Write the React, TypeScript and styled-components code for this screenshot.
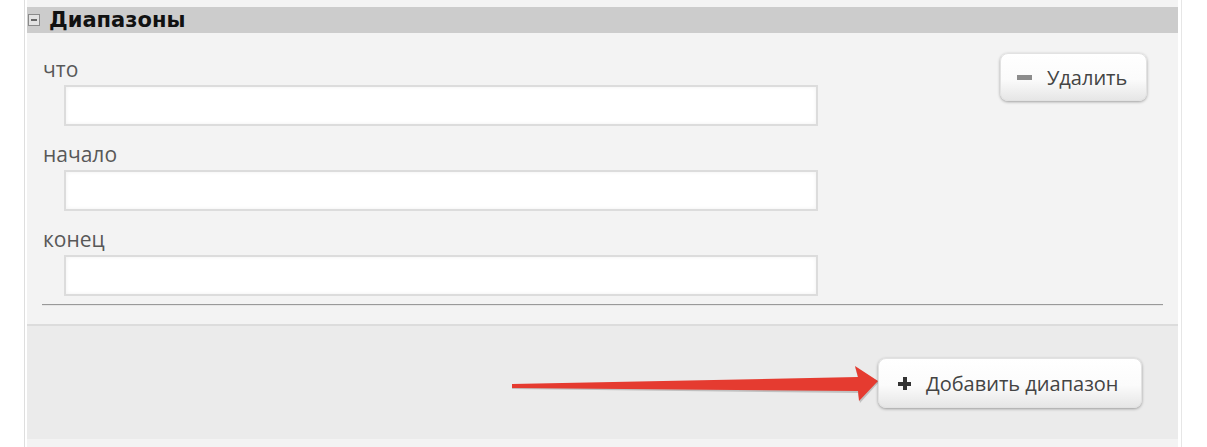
import React from 'react';
import styled, { createGlobalStyle } from 'styled-components';

const Global = createGlobalStyle`
  html, body { margin: 0; padding: 0; background: #fff; }
  body { font-family: "Open Sans", "DejaVu Sans", sans-serif; }
  * { box-sizing: border-box; }
`;

const fields = ['что', 'начало', 'конец'];

export default function App() {
  return (
    <>
      <Global />
      <Frame>
        <Panel>
          <Header>
            <Toggle />
            <Title>Диапазоны</Title>
          </Header>
          <Section>
            <Body>
              <Fields>
                {fields.map((f) => (
                  <Field key={f}>
                    <Label>{f}</Label>
                    <Input type="text" />
                  </Field>
                ))}
              </Fields>
              <Button $w={147} $h={48}>
                <MinusIcon />
                Удалить
              </Button>
            </Body>
            <Divider />
          </Section>
          <Footer>
            <Arrow viewBox="505 355 380 50" width="380" height="50">
              <polygon
                points="512,384 858,377 855,366 879,381 860,402 858,392 512,388"
                fill="#000"
                opacity="0.18"
              />
              <polygon
                points="512,383 858,376 855,365 878,380 859,400 858,390 512,387"
                fill="#e53b30"
              />
            </Arrow>
            <Button $w={264} $h={50}>
              <PlusIcon />
              Добавить диапазон
            </Button>
          </Footer>
        </Panel>
      </Frame>
    </>
  );
}

const Frame = styled.div`
  margin-left: 24px;
  width: 1158px;
  min-height: 100vh;
  border-left: 1px solid #dedede;
  border-right: 1px solid #e6e6e6;
  padding: 0 3px 0 2px;
  display: flex;
`;

const Panel = styled.div`
  flex: 1;
  background: #f3f3f3;
  padding-top: 7px;
`;

const Header = styled.div`
  height: 26px;
  background: #cccccc;
  display: flex;
  align-items: center;
  padding-left: 1px;
`;

const Toggle = styled.span`
  width: 12px;
  height: 12px;
  border: 1px solid #8a8a8a;
  background: #e2e2e2;
  position: relative;
  margin-right: 9px;

  &::after {
    content: '';
    position: absolute;
    left: 2px;
    right: 2px;
    top: 4px;
    height: 2px;
    background: #666;
  }
`;

const Title = styled.span`
  font-family: "DejaVu Sans", Verdana, sans-serif;
  font-weight: 700;
  font-size: 21px;
  color: #111;
`;

const Section = styled.div`
  padding-bottom: 18px;
  border-bottom: 2px solid #dcdcdc;
`;

const Body = styled.div`
  display: flex;
  justify-content: space-between;
  align-items: flex-start;
  padding: 20px 31px 0 16px;
`;

const Fields = styled.div`
  margin-top: 4px;
  display: flex;
  flex-direction: column;
`;

const Field = styled.div`
  display: flex;
  flex-direction: column;
  padding-bottom: 16px;

  &:last-child { padding-bottom: 0; }
`;

const Label = styled.label`
  font-size: 21px;
  line-height: 24px;
  color: #585858;
`;

const Input = styled.input`
  margin: 4px 0 0 21px;
  width: 754px;
  height: 41px;
  border: 2px solid #dcdcdc;
  background: #fff;
  box-shadow: inset 0 0 4px rgba(0, 0, 0, 0.06);
  outline: none;
`;

const Divider = styled.div`
  margin: 8px 15px 0;
  border-top: 1px solid #999;
  border-bottom: 1px solid #e6e6e6;
`;

const Footer = styled.div`
  position: relative;
  height: 113px;
  background: #ebebeb;
  display: flex;
  justify-content: flex-end;
  align-items: flex-start;
  padding: 32px 36px 0 0;
`;

const Arrow = styled.svg`
  position: absolute;
  left: 478px;
  top: 30px;
  overflow: visible;
`;

const Button = styled.button<{ $w: number; $h: number }>`
  position: relative;
  width: ${(p) => p.$w}px;
  height: ${(p) => p.$h}px;
  display: flex;
  align-items: center;
  padding: 0 0 0 16px;
  border: 1px solid #e2e2e2;
  border-radius: 8px;
  background: linear-gradient(to bottom, #ffffff 0%, #fbfbfb 55%, #e6e6e6 100%);
  box-shadow: 0 1px 3px rgba(0, 0, 0, 0.35);
  font-family: "Open Sans", sans-serif;
  font-size: 20px;
  color: #444;
  cursor: pointer;
`;

const MinusIcon = styled.span`
  width: 15px;
  height: 5px;
  background: #8c8c8c;
  margin-right: 15px;
`;

const PlusIcon = styled.span`
  position: relative;
  width: 13px;
  height: 13px;
  margin: 0 15px 0 3px;

  &::before,
  &::after {
    content: '';
    position: absolute;
    background: #333;
  }
  &::before { left: 0; right: 0; top: 5px; height: 4px; }
  &::after { top: 0; bottom: 0; left: 5px; width: 4px; }
`;
